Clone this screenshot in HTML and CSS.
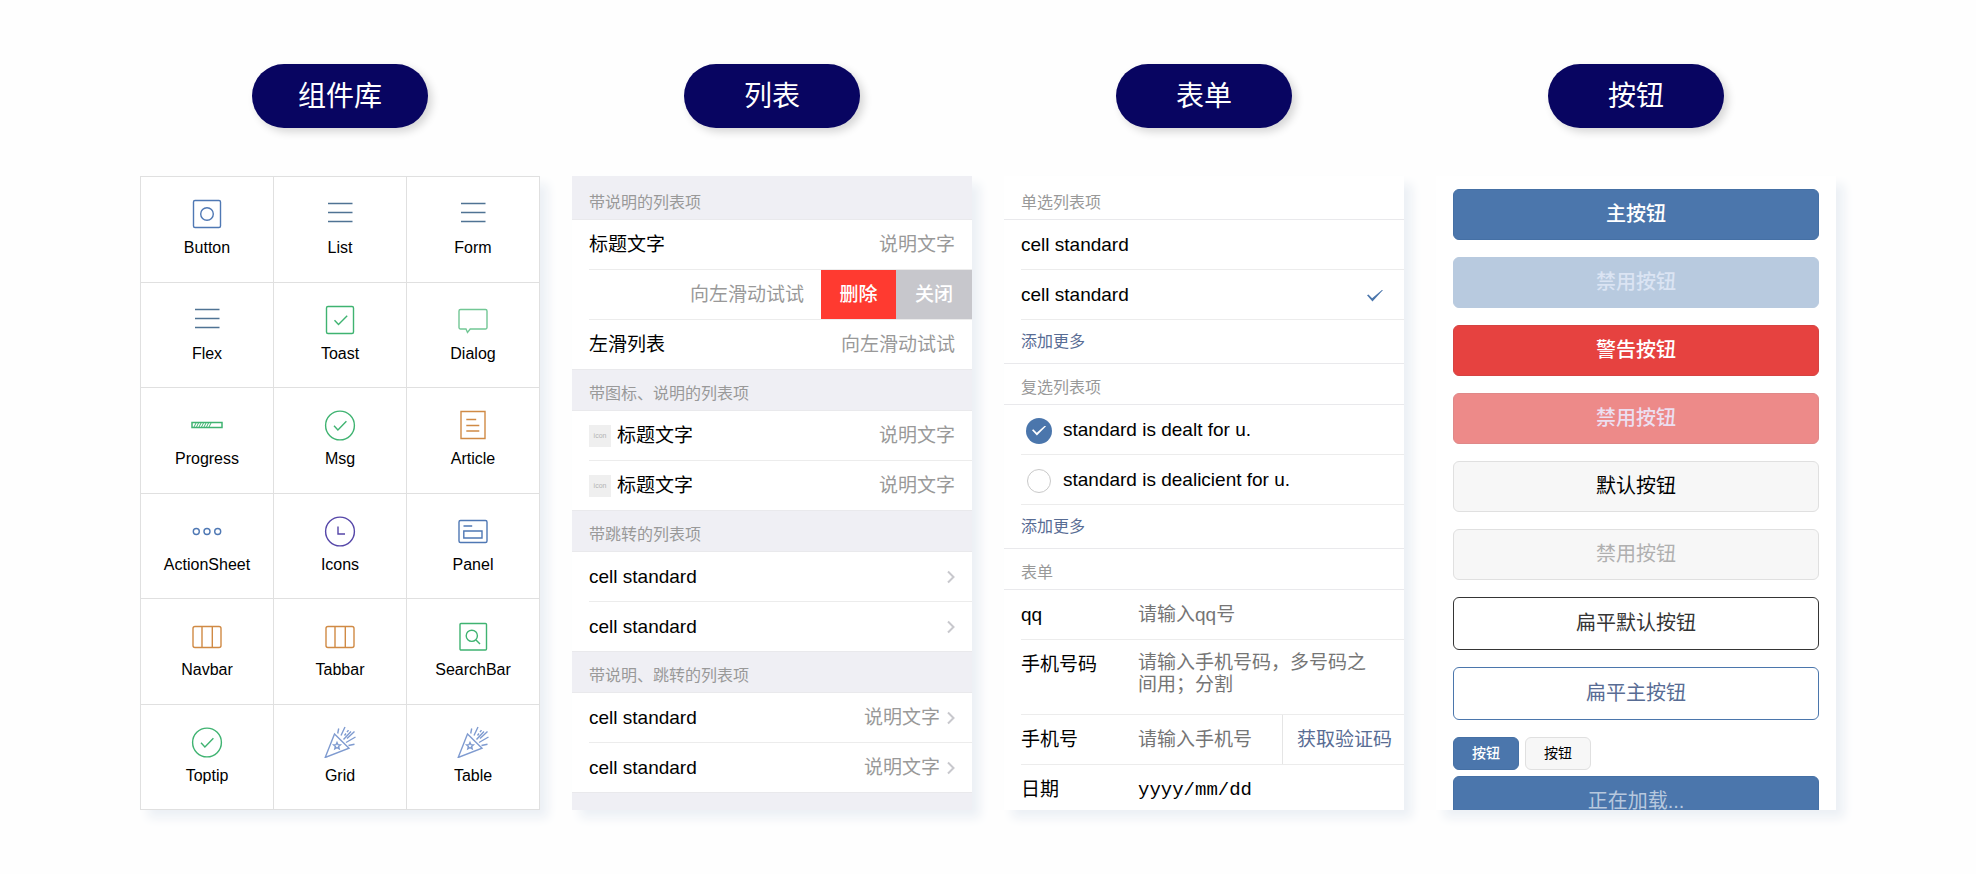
FILE: index.html
```html
<!DOCTYPE html>
<html lang="zh-CN">
<head>
<meta charset="utf-8">
<meta name="viewport" content="width=device-width, initial-scale=1">
<title>组件库</title>
<link rel="stylesheet" href="styles.css">
</head>
<body>
<svg class="sprite" aria-hidden="true">
  <symbol id="i-button" viewBox="0 0 32 32"><rect x="2.5" y="2.5" width="27" height="27" rx="1.5"/><circle cx="16" cy="16" r="6.3"/></symbol>
  <symbol id="i-lines" viewBox="0 0 32 32"><path d="M4 5.5h24.500M4 14.500h24.500M4 23.500h24.500"/></symbol>
  <symbol id="i-toast" viewBox="0 0 32 32"><rect x="2.5" y="2.5" width="27" height="27" rx="1.5"/><path d="M10.5 16.3l4 4.2 8.7-8.8"/></symbol>
  <symbol id="i-dialog" viewBox="0 0 32 32"><path d="M3.500 5.5h25a1.500 1.500 0 0 1 1.500 1.500v16.500a1.500 1.500 0 0 1-1.500 1.500H13.200l-2.700 3.500-1.500-3.500H3.500a1.500 1.500 0 0 1-1.500-1.500V7a1.500 1.500 0 0 1 1.500-1.500z"/></symbol>
  <symbol id="i-progress" viewBox="0 0 32 32"><rect x="1" y="13.500" width="30" height="5" stroke-width="1.500"/><path d="M3 18l2-4M5.500 18l2-4M8 18l2-4M10.500 18l2-4M13 18l2-4M15.500 18l2-4M18 18l2-4" stroke-width="1"/></symbol>
  <symbol id="i-check" viewBox="0 0 32 32"><circle cx="16" cy="16.500" r="14.400"/><path d="M10 16.800l3.900 4.200 8.500-8.700"/></symbol>
  <symbol id="i-article" viewBox="0 0 32 32"><path d="M4 2.500h24v27H4zM9.300 10.500h9.900M9.300 16.500h13M9.300 22h13"/></symbol>
  <symbol id="i-dots" viewBox="0 0 32 32"><circle cx="5.300" cy="16.500" r="3"/><circle cx="16" cy="16.500" r="3"/><circle cx="26.700" cy="16.500" r="3"/></symbol>
  <symbol id="i-clock" viewBox="0 0 32 32"><circle cx="16" cy="16.500" r="14.400"/><path d="M14 11.500v7.500h7"/></symbol>
  <symbol id="i-panel" viewBox="0 0 32 32"><rect x="2" y="5.500" width="28" height="22" rx="1.500"/><path d="M6.500 11h8.700M6.800 16h18.200v7H6.800z"/></symbol>
  <symbol id="i-bars" viewBox="0 0 32 32"><rect x="2" y="6.500" width="28" height="21" rx="2"/><path d="M11 6.500v21M21.300 6.500v21"/></symbol>
  <symbol id="i-search" viewBox="0 0 32 32"><rect x="3" y="3.500" width="26.500" height="26.500" rx="1"/><circle cx="14.800" cy="15.800" r="5.600"/><path d="M19 20l4 4"/></symbol>
  <symbol id="i-party" viewBox="0 0 32 32"><path d="M10.500 8L1.200 31.500 25 22.200zM13.700 7.500l1-5M17 9.500l4-8.500M20.500 9.500l1.500-2M23 6.200l1.500-2M19.500 13.500L27 5.500M23 12.500l7.500-7M22 16.500l9.500-5.500M24.500 19.500l6-1.200"/><path d="M13 16.500l1 2.200 2.400.2-1.800 1.600.6 2.400-2.200-1.300-2.200 1.300.6-2.400-1.800-1.600 2.400-.2z"/></symbol>
</svg>

<main class="showcase">
  <section class="column">
    <h2 class="pill">组件库</h2>
    <nav class="panel menu" aria-label="组件库">
      <a class="menu-item" href="#button"><svg class="icon blue"><use href="#i-button"/></svg>Button</a>
      <a class="menu-item" href="#list"><svg class="icon slate"><use href="#i-lines"/></svg>List</a>
      <a class="menu-item" href="#form"><svg class="icon slate"><use href="#i-lines"/></svg>Form</a>
      <a class="menu-item" href="#flex"><svg class="icon slate"><use href="#i-lines"/></svg>Flex</a>
      <a class="menu-item" href="#toast"><svg class="icon green"><use href="#i-toast"/></svg>Toast</a>
      <a class="menu-item" href="#dialog"><svg class="icon mint"><use href="#i-dialog"/></svg>Dialog</a>
      <a class="menu-item" href="#progress"><svg class="icon green"><use href="#i-progress"/></svg>Progress</a>
      <a class="menu-item" href="#msg"><svg class="icon green"><use href="#i-check"/></svg>Msg</a>
      <a class="menu-item" href="#article"><svg class="icon orange"><use href="#i-article"/></svg>Article</a>
      <a class="menu-item" href="#actionsheet"><svg class="icon blue"><use href="#i-dots"/></svg>ActionSheet</a>
      <a class="menu-item" href="#icons"><svg class="icon violet"><use href="#i-clock"/></svg>Icons</a>
      <a class="menu-item" href="#panel"><svg class="icon blue"><use href="#i-panel"/></svg>Panel</a>
      <a class="menu-item" href="#navbar"><svg class="icon orange"><use href="#i-bars"/></svg>Navbar</a>
      <a class="menu-item" href="#tabbar"><svg class="icon orange"><use href="#i-bars"/></svg>Tabbar</a>
      <a class="menu-item" href="#searchbar"><svg class="icon green"><use href="#i-search"/></svg>SearchBar</a>
      <a class="menu-item" href="#toptip"><svg class="icon green"><use href="#i-check"/></svg>Toptip</a>
      <a class="menu-item" href="#grid"><svg class="icon sky"><use href="#i-party"/></svg>Grid</a>
      <a class="menu-item" href="#table"><svg class="icon sky"><use href="#i-party"/></svg>Table</a>
    </nav>
  </section>

  <section class="column">
    <h2 class="pill">列表</h2>
    <div class="panel clipped lists">
      <h3 class="group-title">带说明的列表项</h3>
      <div class="group">
        <div class="cell"><span class="cell-main">标题文字</span><span class="note">说明文字</span></div>
        <div class="cell swiped"><span class="cell-main"></span><span class="note">向左滑动试试</span><button class="swipe-action delete" type="button">删除</button><button class="swipe-action close" type="button">关闭</button></div>
        <div class="cell"><span class="cell-main">左滑列表</span><span class="note">向左滑动试试</span></div>
      </div>
      <h3 class="group-title">带图标、说明的列表项</h3>
      <div class="group">
        <div class="cell"><svg class="thumb" viewBox="0 0 22 22"><rect width="22" height="22"/><text x="11" y="13">icon</text></svg><span class="cell-main">标题文字</span><span class="note">说明文字</span></div>
        <div class="cell"><svg class="thumb" viewBox="0 0 22 22"><rect width="22" height="22"/><text x="11" y="13">icon</text></svg><span class="cell-main">标题文字</span><span class="note">说明文字</span></div>
      </div>
      <h3 class="group-title">带跳转的列表项</h3>
      <div class="group">
        <a class="cell" href="#cell-1"><span class="cell-main">cell standard</span><svg class="chevron" viewBox="0 0 8 14"><path d="M1 1.500l5.500 5.500L1 12.500"/></svg></a>
        <a class="cell" href="#cell-2"><span class="cell-main">cell standard</span><svg class="chevron" viewBox="0 0 8 14"><path d="M1 1.500l5.500 5.500L1 12.500"/></svg></a>
      </div>
      <h3 class="group-title">带说明、跳转的列表项</h3>
      <div class="group">
        <a class="cell" href="#cell-3"><span class="cell-main">cell standard</span><span class="note">说明文字</span><svg class="chevron" viewBox="0 0 8 14"><path d="M1 1.500l5.500 5.500L1 12.500"/></svg></a>
        <a class="cell" href="#cell-4"><span class="cell-main">cell standard</span><span class="note">说明文字</span><svg class="chevron" viewBox="0 0 8 14"><path d="M1 1.500l5.500 5.500L1 12.500"/></svg></a>
      </div>
    </div>
  </section>

  <section class="column">
    <h2 class="pill">表单</h2>
    <form class="panel clipped">
      <h3 class="group-title">单选列表项</h3>
      <div class="group">
        <label class="cell"><span class="cell-main">cell standard</span><input class="radio" type="radio" name="single"></label>
        <label class="cell"><span class="cell-main">cell standard</span><input class="radio" type="radio" name="single" checked></label>
        <a class="cell more" href="#more-single">添加更多</a>
      </div>
      <h3 class="group-title">复选列表项</h3>
      <div class="group">
        <label class="cell"><input class="check" type="checkbox" checked><span class="cell-main">standard is dealt for u.</span></label>
        <label class="cell"><input class="check" type="checkbox"><span class="cell-main">standard is dealicient for u.</span></label>
        <a class="cell more" href="#more-multi">添加更多</a>
      </div>
      <h3 class="group-title">表单</h3>
      <div class="group">
        <div class="cell"><label class="field-label" for="qq">qq</label><input class="field" id="qq" type="text" placeholder="请输入qq号"></div>
        <div class="cell tall"><label class="field-label" for="phones">手机号码</label><textarea class="field area" id="phones" rows="2" placeholder="请输入手机号码，多号码之间用；分割"></textarea></div>
        <div class="cell flush"><label class="field-label" for="phone">手机号</label><input class="field" id="phone" type="tel" placeholder="请输入手机号"><button class="code-button" type="button">获取验证码</button></div>
        <div class="cell"><label class="field-label" for="date">日期</label><input class="field date" id="date" type="text" placeholder="yyyy/mm/dd"></div>
      </div>
    </form>
  </section>

  <section class="column">
    <h2 class="pill">按钮</h2>
    <div class="panel clipped buttons">
      <button class="btn primary" type="button">主按钮</button>
      <button class="btn primary" type="button" disabled>禁用按钮</button>
      <button class="btn warn" type="button">警告按钮</button>
      <button class="btn warn" type="button" disabled>禁用按钮</button>
      <button class="btn default" type="button">默认按钮</button>
      <button class="btn default" type="button" disabled>禁用按钮</button>
      <button class="btn plain" type="button">扁平默认按钮</button>
      <button class="btn plain plain-primary" type="button">扁平主按钮</button>
      <div class="mini-row">
        <button class="btn mini primary" type="button">按钮</button>
        <button class="btn mini default" type="button">按钮</button>
      </div>
      <button class="btn primary loading" type="button">正在加载...</button>
    </div>
  </section>
</main>
</body>
</html>
```
FILE: styles.css
```css
* {
  box-sizing: border-box;
}

body {
  margin: 0;
  background: #fefefe;
  color: #000;
  font-family: "Liberation Sans", "Noto Sans CJK SC", sans-serif;
  font-size: 19px;
  line-height: 26px;
}

a {
  color: inherit;
  text-decoration: none;
}

button,
input,
textarea {
  font: inherit;
  color: inherit;
  margin: 0;
  padding: 0;
  border: 0;
  background: none;
}

button {
  cursor: pointer;
}

.sprite {
  display: none;
}

.showcase {
  display: grid;
  grid-template-columns: repeat(4, minmax(0, 1fr));
  gap: 32px;
  max-width: 1976px;
  margin: 0 auto;
  padding: 64px 140px;
}

.column {
  display: flex;
  flex-direction: column;
  gap: 48px;
}

.pill {
  align-self: center;
  min-width: 176px;
  margin: 0;
  padding: 13px 32px 11px;
  border-radius: 32px;
  background: #080561;
  box-shadow: 4px 4px 8px rgba(0, 0, 0, 0.16);
  color: #fff;
  font-size: 28px;
  font-weight: 400;
  line-height: 40px;
  text-align: center;
}

.panel {
  flex: 1;
  background: #fff;
  box-shadow: 8px 8px 10px #ecf0f5;
}

/* The component menu sets the row height; the other panels crop to it. */
.clipped {
  contain: size;
  overflow: hidden;
}

/* Component menu */
.menu {
  display: grid;
  grid-template-columns: repeat(3, 1fr);
  grid-auto-rows: 1fr;
  min-height: 634px;
  border-top: 1px solid #e0e0e0;
  border-left: 1px solid #e0e0e0;
}

.menu-item {
  display: flex;
  flex-direction: column;
  align-items: center;
  gap: 6px;
  padding: 21px 0 20px;
  border-right: 1px solid #e0e0e0;
  border-bottom: 1px solid #e0e0e0;
  font-size: 16px;
  line-height: 24px;
}

.icon {
  width: 32px;
  height: 32px;
  fill: none;
  stroke: currentColor;
  stroke-width: 1.4;
}

.blue { color: #4f78b4; }
.slate { color: #4f7394; }
.green { color: #3fb371; }
.mint { color: #72c795; }
.orange { color: #d08a45; }
.violet { color: #5546a8; }
.sky { color: #7f9bd0; }

/* Grouped cells */
.group-title {
  margin: 0;
  padding: 13px 17px 5px;
  color: #999;
  font-size: 16px;
  font-weight: 400;
  line-height: 22px;
}

.group-title:first-child {
  padding-top: 16px;
}

.lists {
  background: #efeff4;
}

.group {
  border-top: 1px solid #e9e9ec;
  border-bottom: 1px solid #e9e9ec;
  background: #fff;
}

.cell {
  display: flex;
  align-items: center;
  min-height: 49px;
  margin-left: 17px;
  padding-right: 17px;
}

.cell + .cell {
  min-height: 50px;
  border-top: 1px solid #ececec;
}

.cell-main {
  flex: 1;
}

.note {
  color: #999;
}

.swiped {
  align-items: stretch;
  padding-right: 0;
}

.swiped .note {
  align-self: center;
  padding-right: 17px;
}

.swipe-action {
  width: 76px;
  color: #fff;
  font-weight: 500;
}

.delete {
  width: 75px;
  background: #ff3a30;
}

.close {
  background: #c7c7cc;
}

.thumb {
  width: 22px;
  height: 22px;
  margin-right: 6px;
}

.thumb rect {
  fill: #efefef;
}

.thumb text {
  fill: #b4b4b4;
  font-size: 7px;
  text-anchor: middle;
}

.chevron {
  width: 8px;
  height: 14px;
  margin-left: 7px;
  fill: none;
  stroke: #c8c8cd;
  stroke-width: 2;
}

/* Form controls */
.cell.more {
  min-height: 44px;
  color: #586c94;
  font-size: 16px;
}

.radio {
  appearance: none;
  width: 16px;
  height: 12px;
  margin: 2px 4px 0 0;
}

.radio:checked {
  background: #4b76ac;
  clip-path: polygon(0 48%, 9% 42%, 32% 72%, 97% 0, 100% 4%, 34% 100%);
}

.check {
  appearance: none;
  display: grid;
  place-items: center;
  width: 24px;
  height: 24px;
  margin: 2px 12px 0 6px;
  border: 1px solid #c9c9c9;
  border-radius: 50%;
}

.check:checked {
  border-color: #4b76ac;
  background: #4b76ac;
  box-shadow: 0 0 0 1px #4b76ac;
}

.check:checked::before {
  content: "";
  width: 14px;
  height: 10px;
  background: #fff;
  clip-path: polygon(0 48%, 9% 38%, 34% 72%, 93% 0, 100% 8%, 35% 100%);
}

.field-label {
  flex: none;
  width: 117px;
}

.field {
  flex: 1;
  min-width: 0;
  outline: 0;
}

.field::placeholder {
  color: #757575;
  opacity: 1;
}

.tall {
  align-items: flex-start;
  padding-top: 12px;
  padding-bottom: 10px;
}

.area {
  display: block;
  padding: 0 8px 8px 0;
  line-height: 22px;
  resize: none;
  overflow: hidden;
}

.flush {
  align-items: stretch;
  padding-right: 0;
}

.flush .field-label {
  align-self: center;
}

.code-button {
  padding: 0 12px 0 14px;
  border-left: 1px solid #e5e5e5;
  color: #586c94;
}

.date {
  font-family: "Courier New", "Liberation Mono", monospace;
}

.date::placeholder {
  color: #000;
}

/* Buttons */
.buttons {
  display: flex;
  flex-direction: column;
  gap: 17px;
  padding: 13px 17px;
}

.btn {
  flex: none;
  padding: 11px 16px;
  border: 1px solid transparent;
  border-radius: 6px;
  font-size: 20px;
  line-height: 27px;
}

.primary,
.warn {
  color: #fff;
  font-weight: 500;
}

.primary {
  border-color: #4570a5;
  background: #4b76ac;
}

.primary:disabled {
  border-color: #b8cadf;
  background: #b8cadf;
  color: #dbe4f3;
}

.warn {
  border-color: #d54342;
  background: #e64240;
}

.warn:disabled {
  border-color: #df8888;
  background: #ed8a89;
  color: #ecdff0;
}

.default {
  border-color: #e0e0e0;
  background: #f7f7f7;
}

.default:disabled {
  color: #b0b0b0;
}

.plain {
  padding: 12px 16px;
  border-color: #353535;
  color: #353535;
}

.plain-primary {
  border-color: #4b76ac;
  color: #586c94;
}

.mini-row {
  display: flex;
  gap: 6px;
}

.mini {
  min-width: 66px;
  padding: 4px 16px;
  font-size: 14px;
  line-height: 23px;
}

.loading {
  margin-top: -11px;
  color: #b7c8de;
  font-weight: 400;
}
```
